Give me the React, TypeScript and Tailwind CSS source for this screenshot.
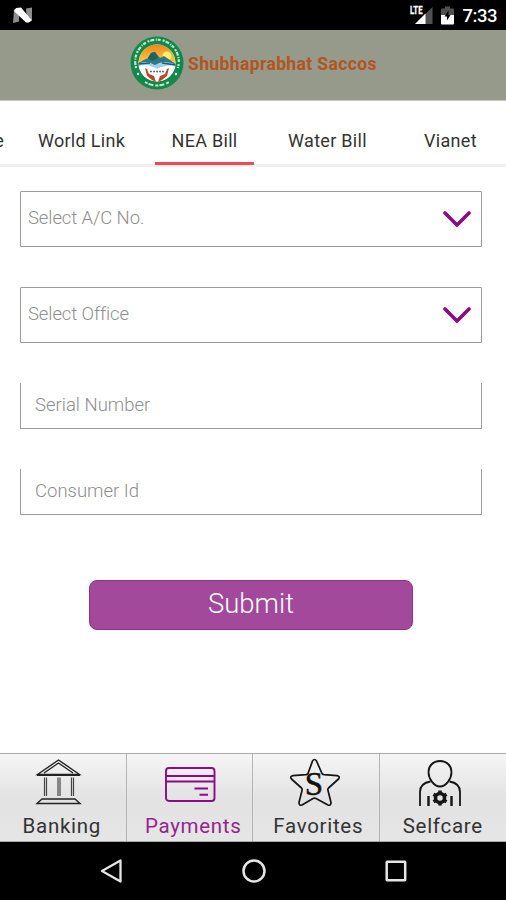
import React, { useState } from 'react';

const tabs = ['World Link', 'NEA Bill', 'Water Bill', 'Vianet'];

const StatusBar: React.FC = () => (
  <div className="flex h-[30px] shrink-0 items-center justify-between bg-black pl-3 pr-[9px] text-white">
    <svg width="21" height="17" viewBox="0 0 21 17" className="mt-px">
      <path d="M2 2.500 L7 1.500 L7 14.500 L1 16 Z" fill="#8d8d8d" />
      <path d="M14 1.500 L20 0.500 L20 14 L15 15.500 Z" fill="#8d8d8d" />
      <path d="M4 1 L9 0.500 L19.500 13 L17 15.500 L14 15.500 L2 4 Z" fill="#fff" />
    </svg>
    <div className="flex items-center">
      <svg width="24" height="20" viewBox="0 0 24 20" className="mr-[7px]">
        <path d="M22.500 2 V19 H5 Z" fill="#505050" />
        <rect x="0" y="0" width="13" height="9.500" fill="#000" />
        <path d="M15.500 8.500 V19 H5 Z" fill="#fff" />
        <text x="0" y="9" textLength="12.500" lengthAdjust="spacingAndGlyphs" fontFamily="Roboto, sans-serif" fontWeight="700" fontSize="11" fill="#fff" stroke="#fff" strokeWidth="0.300">LTE</text>
      </svg>
      <svg width="13" height="19" viewBox="0 0 13 19" className="mr-[9px]">
        <path d="M1 2.500 H4 V0.500 H9 V2.500 H12 Q13 2.500 13 3.500 V9 H0 V3.500 Q0 2.500 1 2.500" fill="#505050" />
        <path d="M0 9 H13 V17.500 Q13 18.500 12 18.500 H1 Q0 18.500 0 17.500 Z" fill="#fff" />
        <path d="M7.500 4.500 L3.500 10.500 H6 V14.500 L9.500 9 H7.500 Z" fill="#000" />
      </svg>
      <span className="mt-[2px] text-[18.500px] leading-none font-medium tracking-[-0.5px]">7:33</span>
    </div>
  </div>
);

const Logo: React.FC = () => (
  <svg width="54" height="54" viewBox="0 0 54 54">
    <defs>
      <linearGradient id="sky" x1="0" y1="0" x2="0" y2="1">
        <stop offset="0" stopColor="#ee7d16" />
        <stop offset="1" stopColor="#ffd348" />
      </linearGradient>
      <clipPath id="disc"><circle cx="27" cy="27" r="18.500" /></clipPath>
    </defs>
    <circle cx="27" cy="27" r="26.500" fill="#12884a" />
    <circle cx="27" cy="27" r="18.500" fill="#fff" />
    <g clipPath="url(#disc)">
      <rect x="7" y="7" width="40" height="21" fill="url(#sky)" />
      <circle cx="37" cy="20" r="4.500" fill="#fff36e" />
      <path d="M7 28 Q13 24 18 22 L21 17 L25 16 L30 22 L34 20 L40 24 L47 29 V32 H7 Z" fill="#337783" />
      <path d="M18 22 L21 17 L25 16 L28 22 L22 25 Z" fill="#16665d" />
      <path d="M7 29 Q15 23 25 29 Q34 23 47 29 L42 31 Q34 29 27 34 Q18 29 7 31 Z" fill="#9bd3ea" />
      <path d="M7 31 Q16 26 27 33 Q38 27 47 31 V47 H7 Z" fill="#fff" />
      <path d="M8 28 L20 27 M32 27 L46 29" stroke="#195f86" strokeWidth="1.300" />
    </g>
    <path d="M15 32 L17 33 L19 38 L24 40 L26 46 L22 44 L17 40 Z M39 32 L37 33 L35 38 L30 40 L28 46 L32 44 L37 40 Z" fill="#b74a28" />
    <path d="M20 35.500 H34" stroke="#63717a" strokeWidth="1.700" strokeDasharray="2 1" />
    <path d="M6.200 32 A21.800 21.800 0 1 1 47.800 32" fill="none" stroke="#c3e8d0" strokeWidth="2.200" strokeDasharray="2 1 4 1.500 1 1 3 2" />
    <path d="M15 46 A22.500 22.500 0 0 0 39 46" fill="none" stroke="#c3e8d0" strokeWidth="2" strokeDasharray="3 1 5 2" />
    <circle cx="8" cy="38" r="1.200" fill="#fff" />
    <circle cx="46" cy="38" r="1.200" fill="#fff" />
  </svg>
);

const SelectBox: React.FC<{ label: string }> = ({ label }) => (
  <button className="flex h-14 w-full items-center justify-between rounded-[1px] border-[1.5px] border-[#9c9c9c] pl-[7px] pr-[10px] text-[18.500px] font-light text-[#8e8e8e]">
    <span className="tracking-[-0.1px]">{label}</span>
    <svg width="28" height="18" viewBox="0 0 28 18" fill="none" stroke="#8b0a86" strokeWidth="3.600" strokeLinecap="round" strokeLinejoin="round">
      <path d="M2 3 L14 15 L26 3" />
    </svg>
  </button>
);

const InputBox: React.FC<{ label: string }> = ({ label }) => (
  <div className="flex h-[46px] w-full items-center rounded-b-[1px] border-x-[1.5px] border-b-[1.5px] border-[#9c9c9c]">
    <input
      type="text"
      placeholder={label}
      className="w-full pl-[14px] text-[18.500px] font-light outline-none placeholder:text-[#8e8e8e]"
    />
  </div>
);

const BankIcon = () => (
  <svg width="50" height="50" viewBox="0 0 50 50" fill="none" stroke="#222" strokeWidth="1.400">
    <path d="M3.500 17.500 L24.500 3 L45.500 17.500 Z M10 16 L24.500 6 L39 16" />
    <path d="M3 18 H46" strokeWidth="1.800" />
    <path d="M10.500 20.500 V39 M12.500 20.500 V39 M24 20.500 V39 M26 20.500 V39 M37.500 20.500 V39 M39.500 20.500 V39" strokeWidth="1.200" stroke="#444" />
    <path d="M8 42 H41 L46 46.500 H3 Z" />
  </svg>
);

const CardIcon = () => (
  <svg width="52" height="50" viewBox="0 0 52 50" fill="none" stroke="#8b0a86" strokeWidth="1.900">
    <rect x="2" y="11" width="48.500" height="33" rx="3" />
    <path d="M2 19 H50.500 M2 24.500 H50.500 M30.500 31.500 H44 M35.500 37.700 H44" />
  </svg>
);

const StarIcon = () => (
  <svg width="52" height="50" viewBox="0 0 52 50" fill="none" stroke="#151515" strokeWidth="1.700" strokeLinejoin="round">
    <path d="M23.500 4 Q25.500 1 27.500 4 L33 16.500 Q33.500 17.500 35 17.700 L48 18.700 Q51.500 19.500 49.500 22 L39.500 31 Q38.500 32 39 33.500 L42 45.500 Q42 49 39 48 L27 41.500 Q25.500 40.700 24 41.500 L13 48 Q10 49 10 45.500 L13 33.500 Q13.500 32 12.500 31 L2.500 22 Q0.500 19.500 4 18.700 L17 17.700 Q18.500 17.500 19 16.500 Z" />
    <text x="25" y="38" textAnchor="middle" fontFamily="'Liberation Serif', serif" fontSize="33" fill="#111" stroke="#111" strokeWidth="0.500">S</text>
  </svg>
);

const PersonIcon = () => (
  <svg width="50" height="50" viewBox="0 0 50 50" fill="none" stroke="#151515" strokeWidth="1.800">
    <path d="M25 4 C18 4 13.500 9 13.500 15 C13.500 22 19 29.500 25 29.500 C31 29.500 36.500 22 36.500 15 C36.500 9 32 4 25 4 Z" />
    <path d="M5 49 V35 C5 28 9 25.500 15.500 24.500 M45 49 V35 C45 28 41 25.500 34.500 24.500" />
    <path d="M13.500 39 V49 M36.500 39 V49" strokeWidth="2.400" />
    <circle cx="25" cy="41" r="4.500" strokeWidth="3.500" />
    <path d="M25 36.500 V33.500 M25 45.500 V48.500 M21 38.800 L18.500 37.300 M29 43.200 L31.500 44.700 M29 38.800 L31.500 37.300 M21 43.200 L18.500 44.700" strokeWidth="3.500" />
  </svg>
);

const navItems = [
  { label: 'Banking', icon: BankIcon, iconOffset: 'pr-[7px]', labelOffset: 'pr-[2px]' },
  { label: 'Payments', icon: CardIcon, iconOffset: 'pl-[2px]', labelOffset: 'pl-2' },
  { label: 'Favorites', icon: StarIcon, iconOffset: 'pr-px', labelOffset: 'pl-[5px]' },
  { label: 'Selfcare', icon: PersonIcon, iconOffset: 'pr-[6px]', labelOffset: 'pl-0' },
];

export default function App() {
  const [activeTab, setActiveTab] = useState('NEA Bill');
  const [activeNav, setActiveNav] = useState('Payments');

  return (
    <div className="flex h-[900px] w-[506px] flex-col overflow-hidden bg-white font-['Roboto',sans-serif]">
      <StatusBar />
      <header className="flex h-[71px] shrink-0 items-center border-b border-[#c5c7c0] bg-[#959a8b] pb-1 pl-[130px]">
        <Logo />
        <h1 className="mt-0.5 ml-1 text-[17.500px] font-bold tracking-[0.38px] whitespace-nowrap text-[#b35421]">Shubhaprabhat Saccos</h1>
      </header>

      <nav className="flex h-[66px] shrink-0 border-b-[3px] border-[#efefef] text-[18px] tracking-[0.3px] text-[#333]">
        <div className="flex h-[61px] w-5 shrink-0 items-center pt-[17px]">
          <span className="flex w-1 justify-end">e</span>
        </div>
        {tabs.map((tab) => (
          <button
            key={tab}
            onClick={() => setActiveTab(tab)}
            className="flex w-[123px] shrink-0 flex-col items-center"
          >
            <span className="flex h-[61px] shrink-0 items-center pt-[17px] whitespace-nowrap">{tab}</span>
            {activeTab === tab && <span className="h-[3px] w-[99px] shrink-0 bg-[#e94b50]" />}
          </button>
        ))}
      </nav>

      <main className="flex flex-1 flex-col items-center pt-6 pr-6 pl-5">
        <div className="flex w-full flex-col gap-10">
          <SelectBox label="Select A/C No." />
          <SelectBox label="Select Office" />
          <InputBox label="Serial Number" />
          <InputBox label="Consumer Id" />
        </div>
        <button className="mt-[65px] h-[50px] w-[324px] rounded-lg border border-[#913289] bg-[#a3499b] pb-[2px] text-[27.500px] leading-none font-light text-white">
          Submit
        </button>
      </main>

      <footer className="grid h-[89px] shrink-0 grid-cols-4 border-y border-[#aaa] bg-linear-to-b from-[#f5f5f5] via-[#e3e3e3] to-[#e5e5e5]">
        {navItems.map(({ label, icon: Icon, iconOffset, labelOffset }) => (
          <button
            key={label}
            onClick={() => setActiveNav(label)}
            className="flex min-w-0 flex-col items-center border-r border-[#b5b5b5] pt-[3px] last:border-r-0"
          >
            <span className={iconOffset}>
              <Icon />
            </span>
            <span
              className={`mt-[7px] text-[20.500px] leading-6 tracking-[0.7px] whitespace-nowrap ${labelOffset} ${
                activeNav === label ? 'text-[#93268e]' : 'text-[#333]'
              }`}
            >
              {label}
            </span>
          </button>
        ))}
      </footer>

      <div className="flex h-[58px] shrink-0 items-center justify-between bg-black pr-[99px] pl-[100px]">
        <svg width="22" height="24" viewBox="0 0 22 24" fill="none" stroke="#e5e5e5" strokeWidth="2.300" strokeLinejoin="round">
          <path d="M20.500 1.500 V22.500 L2 12 Z" />
        </svg>
        <svg width="24" height="24" viewBox="0 0 24 24" fill="none" stroke="#e5e5e5" strokeWidth="2.500">
          <circle cx="12" cy="12" r="10.500" />
        </svg>
        <svg width="22" height="22" viewBox="0 0 22 22" fill="none" stroke="#e5e5e5" strokeWidth="2.500">
          <rect x="1.700" y="1.700" width="18.500" height="18.500" rx="0.500" />
        </svg>
      </div>
    </div>
  );
}
